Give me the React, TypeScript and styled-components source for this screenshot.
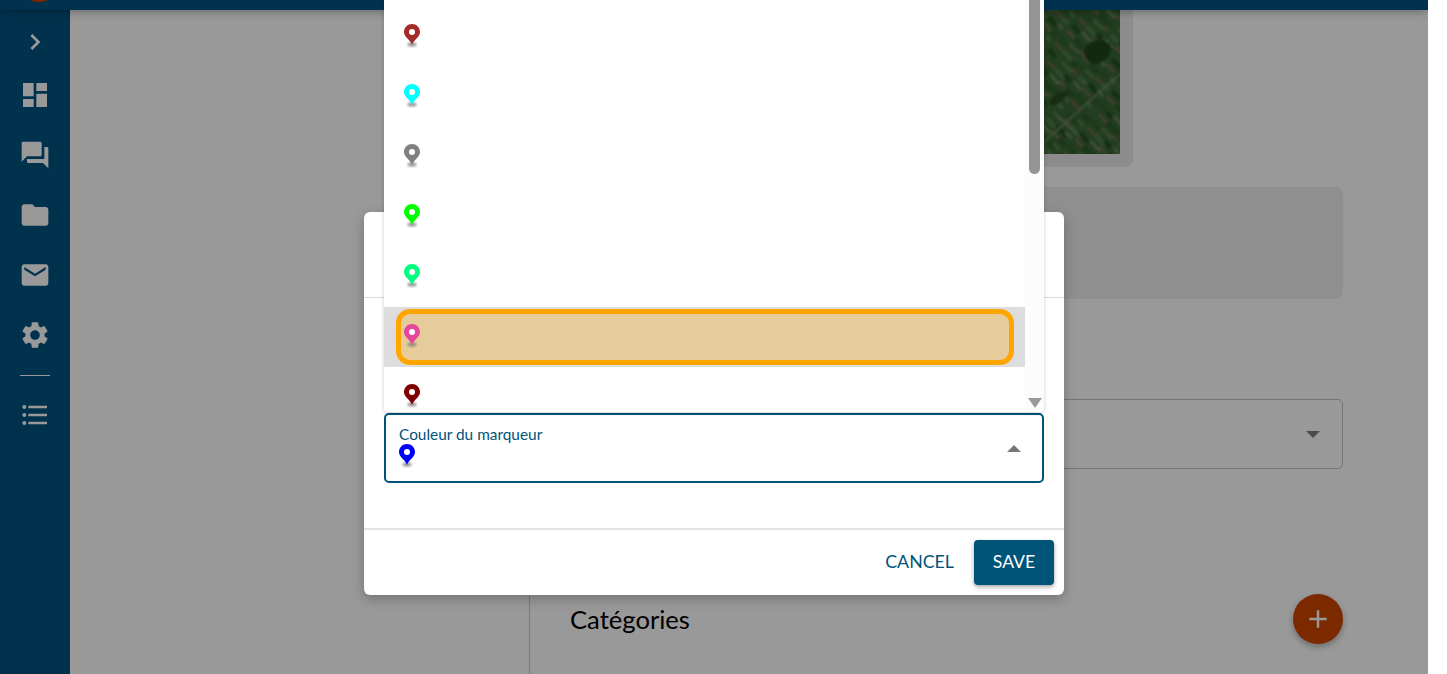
import { FC } from "react";
import styled, { createGlobalStyle } from "styled-components";
import {
  MdAdd,
  MdChevronRight,
  MdDashboard,
  MdEmail,
  MdFolder,
  MdForum,
  MdFormatListBulleted,
  MdSettings,
} from "react-icons/md";

const GlobalStyle = createGlobalStyle`
  html, body {
    margin: 0;
    height: 100%;
    overflow: hidden;
    background: #fff;
    font-family: Lato, "Open Sans", sans-serif;
  }
`;

const markerColors = ["#a52a2a", "#00ffff", "#808080", "#00ff00", "#00ff7f", "#e6479b", "#800000"];
const activeMarker = 5;

// deterministic patches for the satellite picture
const fieldColors = ["#8a6a52", "#4f7f48", "#1f4a1c", "#6c8a60", "#94705c", "#2c5a28", "#2f6029", "#5a8250"];
const fields = Array.from({ length: 150 }, (_, i) => ({
  x: (i * 37) % 96 - 12,
  y: (i * 53) % 158 - 8,
  w: 7 + (i * 7) % 9,
  h: 2 + (i * 3) % 4,
  color: fieldColors[(i * 5) % fieldColors.length],
}));

const Marker: FC<{ color: string }> = ({ color }) => (
  <MarkerIcon viewBox="0 0 16 24">
    <defs>
      <filter id="marker-shadow" x="-30%" y="-60%" width="160%" height="220%">
        <feGaussianBlur stdDeviation="1" />
      </filter>
    </defs>
    <ellipse cx="8" cy="20.5" rx="4.6" ry="2.2" fill="#777" opacity=".7" filter="url(#marker-shadow)" />
    <path
      d="M8 0C3.6 0 0 3.5 0 7.8c0 2.4 1.1 4.2 2.6 5.9C4.6 15.9 7 17.8 8 21c1-3.2 3.4-5.1 5.4-7.3 1.5-1.7 2.6-3.5 2.6-5.9C16 3.5 12.4 0 8 0z"
      fill={color}
    />
    <circle cx="8" cy="8" r="3" fill="#fff" />
  </MarkerIcon>
);

const SatelliteMap: FC = () => (
  <MapPicture viewBox="-474 0 550 144">
    <defs>
      <filter id="map-blur" x="-10%" y="-10%" width="120%" height="120%">
        <feGaussianBlur stdDeviation=".8" />
      </filter>
    </defs>
    <rect x="-474" width="550" height="144" fill="#3a6636" />
    <g opacity=".9" filter="url(#map-blur)">
      {fields.map((f, i) => (
        <rect
          key={`field-${i}`}
          x={f.x}
          y={f.y}
          width={f.w}
          height={f.h}
          fill={f.color}
          transform={`rotate(48 ${f.x} ${f.y})`}
        />
      ))}
      <path d="M42 36c6-8 16-8 24-2 5 5-6 22-16 20s-12-11-8-18z" fill="#1d4219" />
      <path d="M6 88c8-6 14-7 20-6-4 6-12 15-20 13z" fill="#27491f" />
      <path d="M0 132L76 64M14 106l22 22" stroke="#78986f" strokeWidth="1.2" fill="none" />
    </g>
  </MapPicture>
);

const App: FC = () => (
  <Screen>
    <GlobalStyle />
    <TopBar>
      <Avatar />
    </TopBar>
    <Body>
      <Sidebar>
        <ToggleItem><MdChevronRight /></ToggleItem>
        <NavItem><MdDashboard /></NavItem>
        <NavItem><MdForum /></NavItem>
        <NavItem><MdFolder /></NavItem>
        <NavItem><MdEmail /></NavItem>
        <NavItem><MdSettings /></NavItem>
        <NavDivider />
        <NavItem><MdFormatListBulleted /></NavItem>
      </Sidebar>
      <LeftColumn />
      <RightColumn>
        <MapCard><SatelliteMap /></MapCard>
        <InfoPanel />
        <PageSelect><Caret $color="rgba(0,0,0,.5)" /></PageSelect>
        <SectionTitle>Catégories</SectionTitle>
      </RightColumn>
    </Body>
    <AddButton><MdAdd /></AddButton>

    <Backdrop />

    <Modal>
      <ModalHeader />
      <ModalBody>
        <ColorField>
          <FieldValue>
            <FieldLabel>Couleur du marqueur</FieldLabel>
            <FieldMarker><Marker color="#0000ff" /></FieldMarker>
          </FieldValue>
          <Caret $color="#777" $up />
        </ColorField>
      </ModalBody>
      <ModalFooter>
        <CancelButton>CANCEL</CancelButton>
        <SaveButton>SAVE</SaveButton>
      </ModalFooter>
    </Modal>

    <Dropdown>
      <OptionList>
        {markerColors.map((color, idx) => (
          <Option key={color} $active={idx === activeMarker}>
            <OptionInner $active={idx === activeMarker}>
              <Marker color={color} />
            </OptionInner>
          </Option>
        ))}
      </OptionList>
      <ScrollTrack>
        <ScrollThumb />
        <Caret $color="#999" $tall />
      </ScrollTrack>
    </Dropdown>
  </Screen>
);

export default App;

const Screen = styled.div`
  position: relative;
  display: flex;
  flex-direction: column;
  width: 1428px;
  height: 674px;
  overflow: hidden;
  background: #fff;
`;

const TopBar = styled.header`
  position: relative;
  z-index: 2;
  display: flex;
  flex: none;
  height: 10px;
  padding-left: 19px;
  background: #005480;
  box-shadow: 0 2px 8px rgba(0, 0, 0, .3);
`;

const Avatar = styled.div`
  flex: none;
  width: 40px;
  height: 40px;
  margin-top: -38px;
  border-radius: 50%;
  background: #d04500;
`;

const Body = styled.div`
  display: flex;
  flex: 1;
  min-height: 0;
`;

const Sidebar = styled.nav`
  display: flex;
  flex: none;
  flex-direction: column;
  align-items: center;
  width: 70px;
  background: #005480;
`;

const NavItem = styled.div`
  display: flex;
  flex: none;
  align-items: center;
  justify-content: center;
  width: 70px;
  height: 60px;
  color: #fff;
  font-size: 32px;
`;

const ToggleItem = styled(NavItem)`
  height: 46px;
  margin-top: 9px;
`;

const NavDivider = styled.div`
  flex: none;
  width: 30px;
  height: 1px;
  margin: 10px 0 9px;
  background: #fff;
`;

const LeftColumn = styled.div`
  flex: none;
  width: 459px;
  border-right: 1px solid #ccc;
`;

const RightColumn = styled.main`
  display: flex;
  flex: 1;
  flex-direction: column;
  min-width: 0;
  padding: 0 85px 0 40px;
`;

const MapCard = styled.section`
  flex: none;
  width: 563px;
  height: 157px;
  padding-bottom: 13px;
  box-sizing: border-box;
  border-radius: 0 0 8px 8px;
  background: #eaeaea;
`;

const MapPicture = styled.svg`
  display: block;
  width: 550px;
  height: 144px;
`;

const InfoPanel = styled.section`
  flex: none;
  height: 112px;
  margin-top: 20px;
  border-radius: 8px;
  background: #eee;
`;

const PageSelect = styled.div`
  display: flex;
  flex: none;
  align-items: center;
  justify-content: flex-end;
  box-sizing: border-box;
  height: 70px;
  margin-top: 100px;
  padding-right: 22px;
  border: 1px solid #c4c4c4;
  border-radius: 5px;
`;

const Caret = styled.span<{ $color: string; $up?: boolean; $tall?: boolean }>`
  flex: none;
  width: 0;
  height: 0;
  border-left: 7px solid transparent;
  border-right: 7px solid transparent;
  border-top: ${({ $up, $tall, $color }) => ($up ? "0 solid transparent" : `${$tall ? 10 : 7}px solid ${$color}`)};
  border-bottom: ${({ $up, $color }) => ($up ? `7px solid ${$color}` : "0 solid transparent")};
`;

const SectionTitle = styled.h2`
  flex: none;
  margin: 135px 0 0;
  color: #000;
  font-size: 25.6px;
  font-weight: 400;
  line-height: 30px;
`;

const AddButton = styled.button`
  position: absolute;
  right: 85px;
  bottom: 30px;
  display: flex;
  align-items: center;
  justify-content: center;
  width: 50px;
  height: 50px;
  padding: 0;
  border: 0;
  border-radius: 50%;
  background: #d04500;
  color: #fff;
  font-size: 30px;
  box-shadow: 0 3px 6px rgba(0, 0, 0, .3);
`;

const Backdrop = styled.div`
  position: absolute;
  inset: 0;
  z-index: 3;
  background: rgba(0, 0, 0, .4);
`;

const Modal = styled.div`
  position: absolute;
  top: 212px;
  left: 364px;
  z-index: 4;
  display: flex;
  flex-direction: column;
  width: 700px;
  height: 383px;
  border-radius: 6px;
  background: #fff;
  box-shadow: 0 4px 12px rgba(0, 0, 0, .25);
`;

const ModalHeader = styled.div`
  flex: none;
  height: 85px;
  border-bottom: 1px solid #ddd;
`;

const ModalBody = styled.div`
  flex: 1;
  padding: 115px 20px 0;
  min-height: 0;
`;

const ColorField = styled.div`
  display: flex;
  align-items: center;
  justify-content: space-between;
  box-sizing: border-box;
  height: 70px;
  padding: 0 21px 0 13px;
  border: 2px solid #005478;
  border-radius: 5px;
`;

const FieldValue = styled.div`
  display: flex;
  flex-direction: column;
  align-self: flex-start;
  align-items: flex-start;
  margin-top: 10px;
`;

const FieldLabel = styled.label`
  color: #005478;
  font-size: 15.4px;
  line-height: 18px;
`;

const FieldMarker = styled.div`
  display: flex;
  height: 24px;
  margin-top: 1px;
`;

const ModalFooter = styled.div`
  display: flex;
  flex: none;
  align-items: center;
  justify-content: flex-end;
  gap: 20px;
  box-sizing: border-box;
  height: 67px;
  padding: 0 10px;
  border-top: 2px solid #e3e3e3;
`;

const CancelButton = styled.button`
  padding: 0 0 4px;
  border: 0;
  background: none;
  color: #005478;
  font-family: Lato, sans-serif;
  font-size: 17.8px;
`;

const SaveButton = styled.button`
  width: 80px;
  height: 45px;
  padding: 0 0 3px;
  border: 0;
  border-radius: 4px;
  background: #005478;
  color: #fff;
  font-family: Lato, sans-serif;
  font-size: 17.6px;
  box-shadow: 0 2px 4px rgba(0, 0, 0, .35);
`;

const Dropdown = styled.div`
  position: absolute;
  top: 0;
  left: 384px;
  z-index: 5;
  display: flex;
  width: 660px;
  height: 412px;
  overflow: hidden;
  border-radius: 0 0 4px 4px;
  background: #fff;
  box-shadow: 0 1px 4px rgba(0, 0, 0, .2);
`;

const OptionList = styled.ul`
  flex: 1;
  min-width: 0;
  margin: 0;
  padding: 7px 0 0;
  list-style: none;
`;

const Option = styled.li<{ $active?: boolean }>`
  box-sizing: border-box;
  height: 60px;
  padding: 2px 11px 2px 12px;
  background: ${({ $active }) => ($active ? "#ddd" : "transparent")};
`;

const OptionInner = styled.div<{ $active?: boolean }>`
  display: flex;
  align-items: center;
  box-sizing: border-box;
  height: 56px;
  padding-left: 3px;
  border: 5px solid ${({ $active }) => ($active ? "#ffa500" : "transparent")};
  border-radius: 14px;
  background: ${({ $active }) => ($active ? "#e6cc9a" : "transparent")};
`;

const MarkerIcon = styled.svg`
  display: block;
  flex: none;
  width: 16px;
  height: 24px;
  margin-bottom: 2px;
`;

const ScrollTrack = styled.div`
  display: flex;
  flex: none;
  flex-direction: column;
  align-items: center;
  justify-content: space-between;
  box-sizing: border-box;
  width: 19px;
  padding: 0 0 4px;
  background: #fcfcfc;
`;

const ScrollThumb = styled.div`
  width: 11px;
  height: 174px;
  border-radius: 0 0 6px 6px;
  background: #959595;
`;
